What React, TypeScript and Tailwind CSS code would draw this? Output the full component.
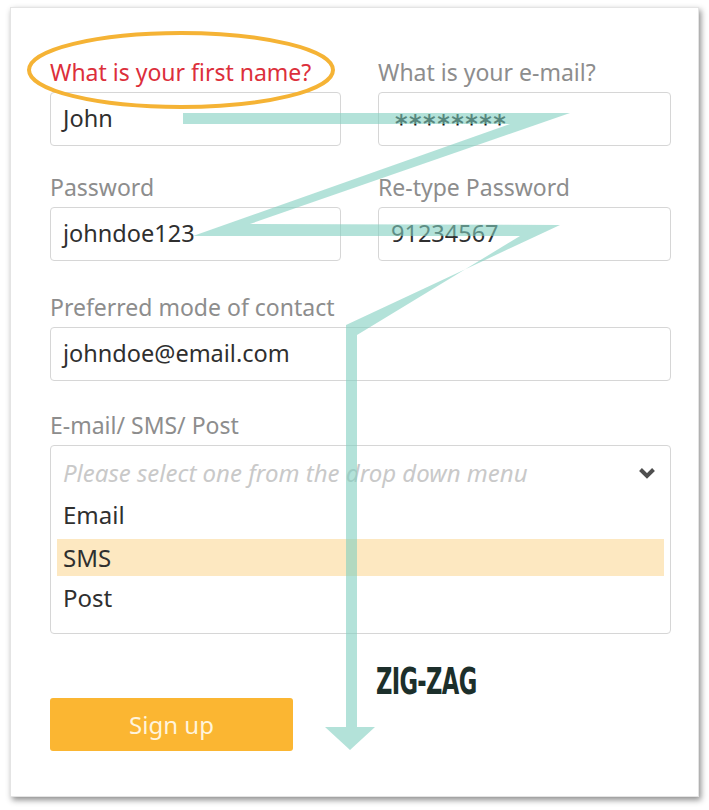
import React from 'react';

const labelCls = 'block h-[28px] leading-[28px] text-[23px] text-[#8d8d8d] mb-[6px]';
const inputCls =
  'flex items-center h-[54px] px-[12px] border-[1.5px] border-[#d6d6d6] rounded-[4px] text-[23.5px] text-[#2f2f2f] bg-white';

const Field: React.FC<{ label: string; value: string; red?: boolean; stars?: boolean }> = ({ label, value, red, stars }) => (
  <div>
    <label className={red ? labelCls.replace('text-[#8d8d8d]', 'text-[#dc2f3b]') : labelCls}>{label}</label>
    <div className={inputCls}>
      {stars ? (
        <span
          className="pl-[4px] text-[24px] font-bold text-[#1a1a1a] tracking-[1.5px] translate-y-[5px]"
          style={{ fontFamily: '"DejaVu Sans", sans-serif' }}
        >
          {value}
        </span>
      ) : (
        <span>{value}</span>
      )}
    </div>
  </div>
);

const App: React.FC = () => {
  return (
    <div className="relative w-[709px] h-[810px] bg-white overflow-hidden" style={{ fontFamily: '"Noto Sans", Lato, sans-serif' }}>
      {/* card */}
      <div className="ml-[10px] mt-[7px] w-[689px] h-[790px] bg-white border border-[#e4e4e4] shadow-[2px_3px_6px_rgba(0,0,0,0.45)] pl-[39px] pr-[27px] pt-[50px]">
        <div className="grid grid-cols-[291px_293px] gap-x-[37px]">
          <Field label="What is your first name?" value="John" red />
          <Field label="What is your e-mail?" value="********" stars />
        </div>
        <div className="grid grid-cols-[291px_293px] gap-x-[37px] mt-[27px]">
          <Field label="Password" value="johndoe123" />
          <Field label="Re-type Password" value="91234567" />
        </div>
        <div className="mt-[32px]">
          <Field label="Preferred mode of contact" value="johndoe@email.com" />
        </div>
        <div className="mt-[30px]">
          <label className={labelCls}>E-mail/ SMS/ Post</label>
          <div className="h-[189px] border-[1.5px] border-[#d6d6d6] rounded-[4px] px-[6px] pt-[6px] text-[24px] text-[#2f2f2f]">
            <div className="flex items-center justify-between h-[42px] pl-[6px] pr-[8px]">
              <span className="italic text-[#c9c9c9]">Please select one from the drop down menu</span>
              <svg width="18" height="12" viewBox="0 0 18 12">
                <path d="M2.5 2.5 L9 9 L15.5 2.5" fill="none" stroke="#4f4f4f" strokeWidth="4" strokeLinejoin="miter" />
              </svg>
            </div>
            <div className="flex items-center h-[42px] pl-[6px]">Email</div>
            <div className="flex items-center h-[37px] my-[3px] pl-[6px] bg-[#fde8c1]">SMS</div>
            <div className="flex items-center h-[38px] pl-[6px]">Post</div>
          </div>
        </div>
        <button className="mt-[64px] w-[243px] h-[53px] rounded-[3px] bg-[#fbb632] text-[24px] text-[#fff4dc]">
          Sign up
        </button>
      </div>

      {/* annotation overlay */}
      <svg className="absolute left-0 top-0 pointer-events-none" width="709" height="810" viewBox="0 0 709 810">
        <ellipse cx="181" cy="70" rx="152" ry="37" fill="none" stroke="#f5b335" strokeWidth="4" />
        <polygon
          points="183,113 570,113 250,224 560,225 346,325 346,727 325,727 350,750 375,727 357,727 357,335 520,236 193,236 510,124 183,124"
          fill="#80cfc0"
          fillOpacity="0.6"
        />
      </svg>
      <div
        className="absolute left-[376px] top-[654px] text-[37px] font-bold text-[#1c2f2b] tracking-[-1px] origin-left scale-x-[0.68]"
        style={{ fontFamily: '"Liberation Sans Narrow", "DejaVu Sans Condensed", sans-serif' }}
      >
        ZIG-ZAG
      </div>
    </div>
  );
};

export default App;
